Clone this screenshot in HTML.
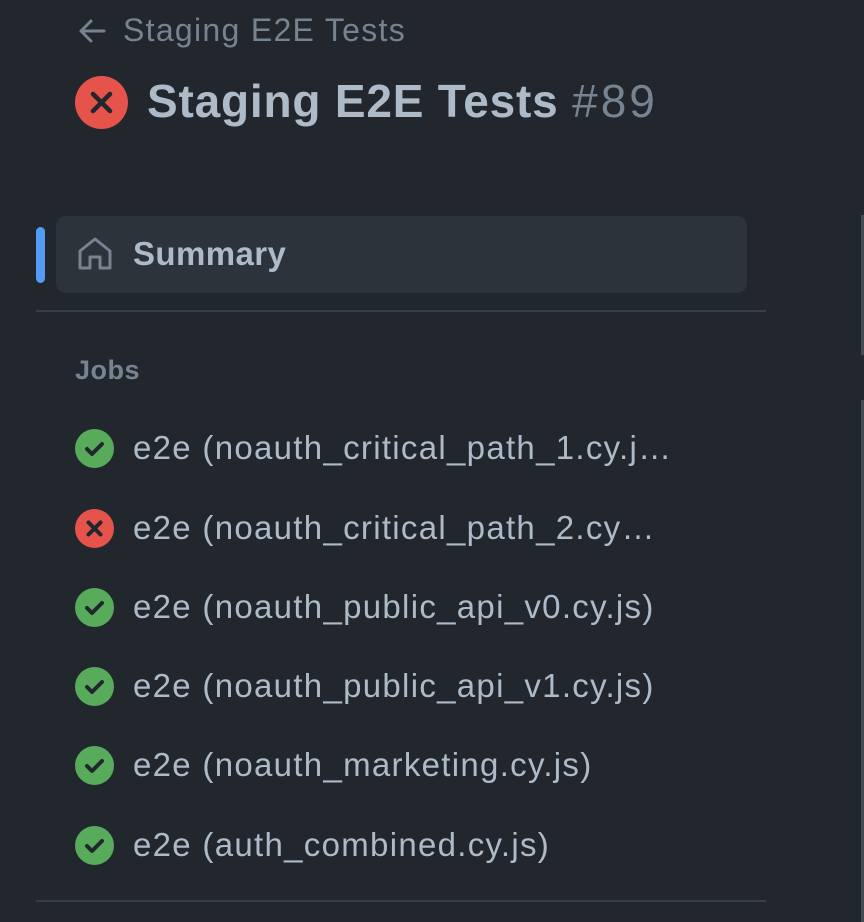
<!DOCTYPE html>
<html><head><style>
body{margin:0;width:864px;height:922px;background:#22272e;font-family:"Liberation Sans",sans-serif;position:relative;overflow:hidden}
.a{position:absolute}
.job{position:absolute;left:75px;height:40px;display:flex;align-items:center}
.job span{margin-left:19px;font-size:33px;letter-spacing:1.3px;color:#adbac7;white-space:nowrap;overflow:hidden;text-overflow:ellipsis;max-width:600px}
</style></head><body>
<svg class="a" style="left:78px;top:18px" width="28" height="26" viewBox="0 0 28 26"><path d="M13 3L3 13L13 23M3 13H26" stroke="#768390" stroke-width="3" fill="none" stroke-linecap="round" stroke-linejoin="round"/></svg>
<div class="a" style="left:123px;top:12px;font-size:32px;letter-spacing:1.3px;color:#768390">Staging E2E Tests</div>
<svg class="a" style="left:75px;top:76px" width="53" height="53" viewBox="0 0 53 53"><circle cx="26.5" cy="26.5" r="26.5" fill="#e5534b"/><path d="M18 18L35 35M35 18L18 35" stroke="#22272e" stroke-width="4.5" stroke-linecap="round"/></svg>
<div class="a" style="left:147px;top:74px;font-size:46px;letter-spacing:0.8px;font-weight:bold;color:#adbac7;white-space:nowrap">Staging E2E Tests <span style="font-weight:normal;color:#768390;letter-spacing:3px">#89</span></div>
<div class="a" style="left:36px;top:227px;width:9px;height:56px;border-radius:5px;background:#539bf5"></div>
<div class="a" style="left:56px;top:216px;width:691px;height:77px;border-radius:10px;background:#2d333b"></div>
<svg class="a" style="left:76px;top:235px" width="38" height="38" viewBox="0 0 38 38"><path d="M4 16L19 4L34 16V33H24V22H14V33H4Z" stroke="#768390" stroke-width="3" fill="none" stroke-linejoin="round"/></svg>
<div class="a" style="left:133px;top:235px;font-size:33px;letter-spacing:0.4px;font-weight:bold;color:#adbac7">Summary</div>
<div class="a" style="left:36px;top:310px;width:730px;height:2px;background:#373e47"></div>
<div class="a" style="left:75px;top:355px;font-size:27px;letter-spacing:0.5px;font-weight:bold;color:#768390">Jobs</div>
<div class="job" style="top:428px"><svg width="39" height="39" viewBox="0 0 39 39"><circle cx="19.5" cy="19.5" r="19.5" fill="#57ab5a"/><path d="M12 20L17 25L27 15" stroke="#22272e" stroke-width="4" fill="none" stroke-linecap="round" stroke-linejoin="round"/></svg><span>e2e (noauth_critical_path_1.cy.j…</span></div>
<div class="job" style="top:508px"><svg width="39" height="39" viewBox="0 0 39 39"><circle cx="19.5" cy="19.5" r="19.5" fill="#e5534b"/><path d="M13.5 13.5L25.5 25.5M25.5 13.5L13.5 25.5" stroke="#22272e" stroke-width="4" stroke-linecap="round"/></svg><span>e2e (noauth_critical_path_2.cy…</span></div>
<div class="job" style="top:587px"><svg width="39" height="39" viewBox="0 0 39 39"><circle cx="19.5" cy="19.5" r="19.5" fill="#57ab5a"/><path d="M12 20L17 25L27 15" stroke="#22272e" stroke-width="4" fill="none" stroke-linecap="round" stroke-linejoin="round"/></svg><span>e2e (noauth_public_api_v0.cy.js)</span></div>
<div class="job" style="top:666px"><svg width="39" height="39" viewBox="0 0 39 39"><circle cx="19.5" cy="19.5" r="19.5" fill="#57ab5a"/><path d="M12 20L17 25L27 15" stroke="#22272e" stroke-width="4" fill="none" stroke-linecap="round" stroke-linejoin="round"/></svg><span>e2e (noauth_public_api_v1.cy.js)</span></div>
<div class="job" style="top:745px"><svg width="39" height="39" viewBox="0 0 39 39"><circle cx="19.5" cy="19.5" r="19.5" fill="#57ab5a"/><path d="M12 20L17 25L27 15" stroke="#22272e" stroke-width="4" fill="none" stroke-linecap="round" stroke-linejoin="round"/></svg><span>e2e (noauth_marketing.cy.js)</span></div>
<div class="job" style="top:825px"><svg width="39" height="39" viewBox="0 0 39 39"><circle cx="19.5" cy="19.5" r="19.5" fill="#57ab5a"/><path d="M12 20L17 25L27 15" stroke="#22272e" stroke-width="4" fill="none" stroke-linecap="round" stroke-linejoin="round"/></svg><span>e2e (auth_combined.cy.js)</span></div>
<div class="a" style="left:36px;top:900px;width:730px;height:2px;background:#373e47"></div>
<div class="a" style="left:861px;top:215px;width:3px;height:140px;background:#444c56"></div>
<div class="a" style="left:861px;top:400px;width:3px;height:522px;background:#444c56"></div>
</body></html>
